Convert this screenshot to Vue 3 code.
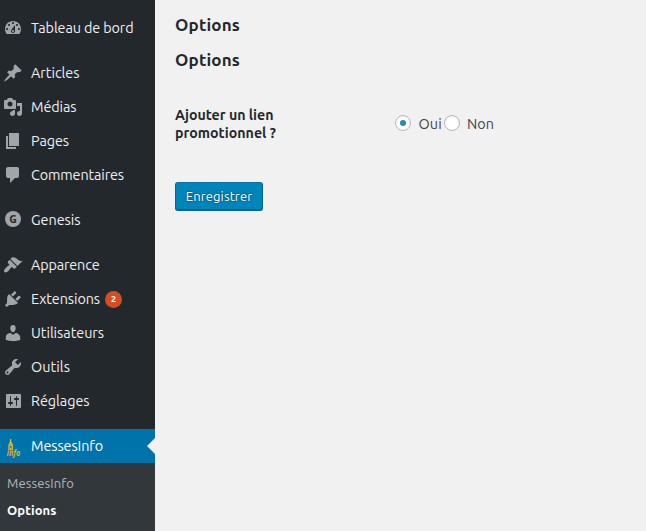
<script setup>
// Tracks a label so that it fills the given width in pixels.
const vFit = {
  mounted(el, binding) {
    const n = el.textContent.trim().length
    const w = el.getBoundingClientRect().width
    el.style.letterSpacing = `${(binding.value - w) / n}px`
  },
}

const groups = [
  [
    { label: 'Tableau de bord', width: 102.5, icon: 'M3.76 16h12.48c1.1-1.37 1.76-3.11 1.76-5 0-4.42-3.58-8-8-8s-8 3.58-8 8c0 1.89.66 3.63 1.76 5zM10 4c.55 0 1 .45 1 1s-.45 1-1 1-1-.45-1-1 .45-1 1-1zM6 6c.55 0 1 .45 1 1s-.45 1-1 1-1-.45-1-1 .45-1 1-1zm8 0c.55 0 1 .45 1 1s-.45 1-1 1-1-.45-1-1 .45-1 1-1zm-5.37 5.55L12 7v6c0 1.1-.9 2-2 2s-2-.9-2-2c0-.57.24-1.08.63-1.45zM4 10c.55 0 1 .45 1 1s-.45 1-1 1-1-.45-1-1 .45-1 1-1zm12 0c.55 0 1 .45 1 1s-.45 1-1 1-1-.45-1-1 .45-1 1-1zm-5 3c0-.55-.45-1-1-1s-1 .45-1 1 .45 1 1 1 1-.45 1-1z' },
  ],
  [
    { label: 'Articles', width: 48.5, icon: 'M10.44 3.02l1.82-1.82 6.36 6.35-1.83 1.82c-1.05-.68-2.48-.57-3.41.36l-.75.75c-.92.93-1.04 2.35-.35 3.41l-1.83 1.82-2.41-2.41-2.8 2.79c-.42.42-3.38 2.71-3.8 2.29s1.86-3.39 2.28-3.81l2.79-2.79L4.1 9.36l1.83-1.82c1.05.69 2.48.57 3.4-.36l.75-.75c.93-.92 1.05-2.35.36-3.41z' },
    { label: 'Médias', width: 45.5, icon: 'M13 11V4c0-.55-.45-1-1-1h-1.67L9 1H5L3.67 3H2c-.55 0-1 .45-1 1v7c0 .55.45 1 1 1h10c.55 0 1-.45 1-1zM7 4.5c1.38 0 2.5 1.12 2.5 2.5S8.38 9.5 7 9.5 4.5 8.38 4.5 7 5.62 4.5 7 4.5zM14 6h5v10.5c0 1.38-1.12 2.5-2.5 2.5S14 17.88 14 16.5s1.12-2.5 2.5-2.5c.17 0 .34.02.5.05V9h-3V6zm-4 8.05V13h2v3.5c0 1.38-1.12 2.5-2.5 2.5S7 17.88 7 16.5 8.12 14 9.5 14c.17 0 .34.02.5.05z' },
    { label: 'Pages', width: 38, icon: 'M6 15V2h10v13H6zm-1 1h8v2H3V5h2v11z' },
    { label: 'Commentaires', width: 93, icon: 'M5 2h9c1.1 0 2 .9 2 2v7c0 1.1-.9 2-2 2h-2l-5 5v-5H5c-1.1 0-2-.9-2-2V4c0-1.1.9-2 2-2z' },
  ],
  [{ label: 'Genesis', width: 49.5, letter: 'G' }],
  [
    { label: 'Apparence', width: 68.5, icon: 'M14.48 11.06L7.41 3.99l1.5-1.5c.5-.56 2.3-.47 3.51.32 1.21.8 1.43 1.28 2.91 2.1 1.18.64 2.45 1.26 4.45.85zm-.71.71L6.7 4.7 4.93 6.47c-.39.39-.39 1.02 0 1.41l1.06 1.06c.39.39.39 1.03 0 1.42-.6.6-1.43 1.11-2.21 1.69-.35.26-.7.53-1.01.84C1.43 14.23.4 16.08 1.4 17.07c.99 1 2.84-.03 4.18-1.36.31-.31.58-.66.85-1.02.57-.78 1.08-1.61 1.69-2.21.39-.39 1.02-.39 1.41 0l1.06 1.06c.39.39 1.02.39 1.41 0z' },
    { label: 'Extensions', width: 69, badge: 2, icon: 'M13.11 4.36L9.87 7.6 8 5.73l3.24-3.24c.35-.34 1.05-.2 1.56.32.52.51.66 1.21.31 1.55zm-8 1.77l.91-1.12 9.01 9.01-1.19.84c-.71.71-2.63 1.16-3.82 1.16H6.14L4.9 17.26c-.59.59-1.54.59-2.12 0-.59-.58-.59-1.53 0-2.12l1.24-1.24v-3.88c0-1.13.4-3.19 1.09-3.89zm7.26 3.97l3.24-3.24c.34-.35 1.04-.21 1.55.31.52.51.66 1.21.31 1.55l-3.24 3.25z' },
    { label: 'Utilisateurs', width: 73, icon: 'M10 9.25c-2.27 0-2.73-3.44-2.73-3.44C7 4.02 7.82 2 9.97 2c2.16 0 2.98 2.02 2.71 3.81 0 0-.41 3.44-2.68 3.44zm0 2.57L12.72 10c2.39 0 4.52 2.33 4.52 4.53v2.49s-3.65 1.13-7.24 1.13c-3.65 0-7.24-1.13-7.24-1.13v-2.49c0-2.25 1.94-4.48 4.47-4.48z' },
    { label: 'Outils', width: 39, icon: 'M16.68 9.77c-1.34 1.34-3.3 1.67-4.95.99l-5.41 6.52c-.99.99-2.59.99-3.58 0s-.99-2.59 0-3.57l6.52-5.42c-.68-1.65-.35-3.61.99-4.95 1.28-1.28 3.12-1.62 4.72-1.06l-2.89 2.89 2.82 2.82 2.86-2.87c.53 1.58.18 3.39-1.08 4.65zM3.81 16.21c.4.39 1.04.39 1.43 0 .4-.4.4-1.04 0-1.43-.39-.4-1.03-.4-1.43 0-.39.39-.39 1.03 0 1.43z' },
    { label: 'Réglages', width: 58.5, icon: 'M18 16V4c0-.55-.45-1-1-1H4c-.55 0-1 .45-1 1v12c0 .55.45 1 1 1h13c.55 0 1-.45 1-1zM8 11h1c.55 0 1 .45 1 1s-.45 1-1 1H8v1.5c0 .28-.22.5-.5.5s-.5-.22-.5-.5V13H6c-.55 0-1-.45-1-1s.45-1 1-1h1V5.5c0-.28.22-.5.5-.5s.5.22.5.5V11zm5-2h-1c-.55 0-1-.45-1-1s.45-1 1-1h1V5.5c0-.28.22-.5.5-.5s.5.22.5.5V7h1c.55 0 1 .45 1 1s-.45 1-1 1h-1v5.5c0 .28-.22.5-.5.5s-.5-.22-.5-.5V9z' },
  ],
]
</script>

<template>
  <div class="page">
    <nav class="sidebar">
      <ul v-for="(group, g) in groups" :key="g" class="group">
        <li v-for="item in group" :key="item.label" class="item">
          <svg v-if="item.icon" class="icon" viewBox="0 0 20 20"><path :d="item.icon" fill-rule="evenodd" /></svg>
          <span v-else class="disc">{{ item.letter }}</span>
          <span v-fit="item.width" class="label">{{ item.label }}</span>
          <span v-if="item.badge" class="badge">{{ item.badge }}</span>
        </li>
      </ul>
      <div class="item current">
        <svg class="icon logo" viewBox="0 0 20 20">
          <path class="church" d="M7.6 3v4M7.6 5.5L6 9.5V14.4M7.6 5.5L9.4 9.5V14.4M5.4 9.3h4.6M7.7 11.5v2.9" />
          <text x="3.8" y="20.2" textLength="13.4" lengthAdjust="spacingAndGlyphs">info</text>
        </svg>
        <span v-fit="72" class="label">MessesInfo</span>
        <i class="arrow"></i>
      </div>
      <ul class="submenu">
        <li><span v-fit="67">MessesInfo</span></li>
        <li class="selected"><span v-fit="49.5">Options</span></li>
      </ul>
    </nav>
    <main class="content">
      <h2><span v-fit="65">Options</span></h2>
      <h2><span v-fit="65">Options</span></h2>
      <div class="field">
        <div class="caption">
          <span v-fit="98.5">Ajouter un lien</span><br />
          <span v-fit="101">promotionnel ?</span>
        </div>
        <div class="choices">
          <i class="radio checked"></i>
          <span v-fit="23.5" class="first">Oui</span>
          <i class="radio"></i>
          <span v-fit="27">Non</span>
        </div>
      </div>
      <button class="save" type="button"><span v-fit="66.5">Enregistrer</span></button>
    </main>
  </div>
</template>

<style>
body {
  margin: 0;
  background: #f1f1f1;
}
</style>

<style scoped>
.page {
  display: flex;
  height: 531px;
  overflow: hidden;
  background: #f1f1f1;
  color: #444;
  font: 14.4px/18px Ubuntu, "Noto Sans", sans-serif;
}
.page span {
  white-space: nowrap;
}
ul {
  margin: 0;
  padding: 0;
  list-style: none;
}
.sidebar {
  display: flex;
  flex-direction: column;
  flex: none;
  width: 155px;
  background: #23282d;
}
.group {
  padding-top: 11px;
}
.item {
  display: flex;
  align-items: center;
  height: 34px;
  padding-left: 3px;
  color: #eee;
}
.label {
  padding-bottom: 1px;
}
.icon {
  flex: none;
  width: 20px;
  height: 20px;
  margin-right: 8px;
  fill: #a0a5aa;
}
.disc {
  flex: none;
  width: 16px;
  height: 16px;
  margin: 0 10px 2px 2px;
  border-radius: 50%;
  background: #a0a5aa;
  color: #23282d;
  font: bold 10.5px/16px "Noto Sans", sans-serif;
  text-align: center;
}
.badge {
  width: 17px;
  height: 17px;
  margin-left: 5px;
  border-radius: 50%;
  background: #d54e21;
  color: #fff;
  font-size: 9px;
  font-weight: 700;
  line-height: 17px;
  text-align: center;
}
.current {
  position: relative;
  flex: none;
  margin-top: 11px;
  background: #0073aa;
  color: #fff;
}
.logo {
  overflow: visible;
  fill: #e3b127;
}
.church {
  fill: none;
  stroke: #e3b127;
  stroke-width: 1.4;
}
.logo text {
  font: italic bold 8px "Noto Sans", sans-serif;
}
.arrow {
  position: absolute;
  top: 9px;
  right: 0;
  border: 8px solid transparent;
  border-left-width: 0;
  border-right-color: #f1f1f1;
}
.submenu {
  flex: 1;
  padding: 7px 0 0 7px;
  background: #32373c;
  color: #b4b9be;
  font-size: 13px;
}
.submenu li {
  height: 27px;
  line-height: 27px;
}
.submenu .selected {
  color: #fff;
  font-weight: 700;
}
.content {
  flex: 1;
  padding: 13px 20px 0;
}
h2 {
  height: 23px;
  margin: 0 0 12px;
  color: #23282d;
  font-size: 17px;
  font-weight: 700;
  line-height: 23px;
}
.field {
  display: flex;
  padding-top: 23px;
}
.caption {
  width: 219px;
  color: #23282d;
  font-size: 14.2px;
  font-weight: 700;
}
.choices {
  display: flex;
  align-items: center;
  height: 36px;
}
.radio {
  display: flex;
  align-items: center;
  justify-content: center;
  box-sizing: border-box;
  width: 16px;
  height: 16px;
  margin: 0 7.5px 2px 1px;
  border: 1px solid #b4b9be;
  border-radius: 50%;
  background: #fff;
  box-shadow: inset 0 1px 2px rgba(0, 0, 0, 0.07);
}
.checked::before {
  content: "";
  width: 6px;
  height: 6px;
  border-radius: 50%;
  background: #1e8cbe;
}
.first {
  margin-right: 0.5px;
}
.save {
  box-sizing: border-box;
  display: flex;
  align-items: center;
  justify-content: center;
  width: 88px;
  height: 29px;
  margin-top: 40px;
  padding: 0 0 1px;
  border: 1px solid;
  border-color: #0073aa #006799 #006799;
  border-radius: 3px;
  background: #0085ba;
  box-shadow: inset 0 -1px 0 #006799;
  color: #fff;
  font: 13px/26px Ubuntu, "Noto Sans", sans-serif;
  text-shadow: 0 -1px 1px #006799, 1px 0 1px #006799, 0 1px 1px #006799, -1px 0 1px #006799;
}
</style>
